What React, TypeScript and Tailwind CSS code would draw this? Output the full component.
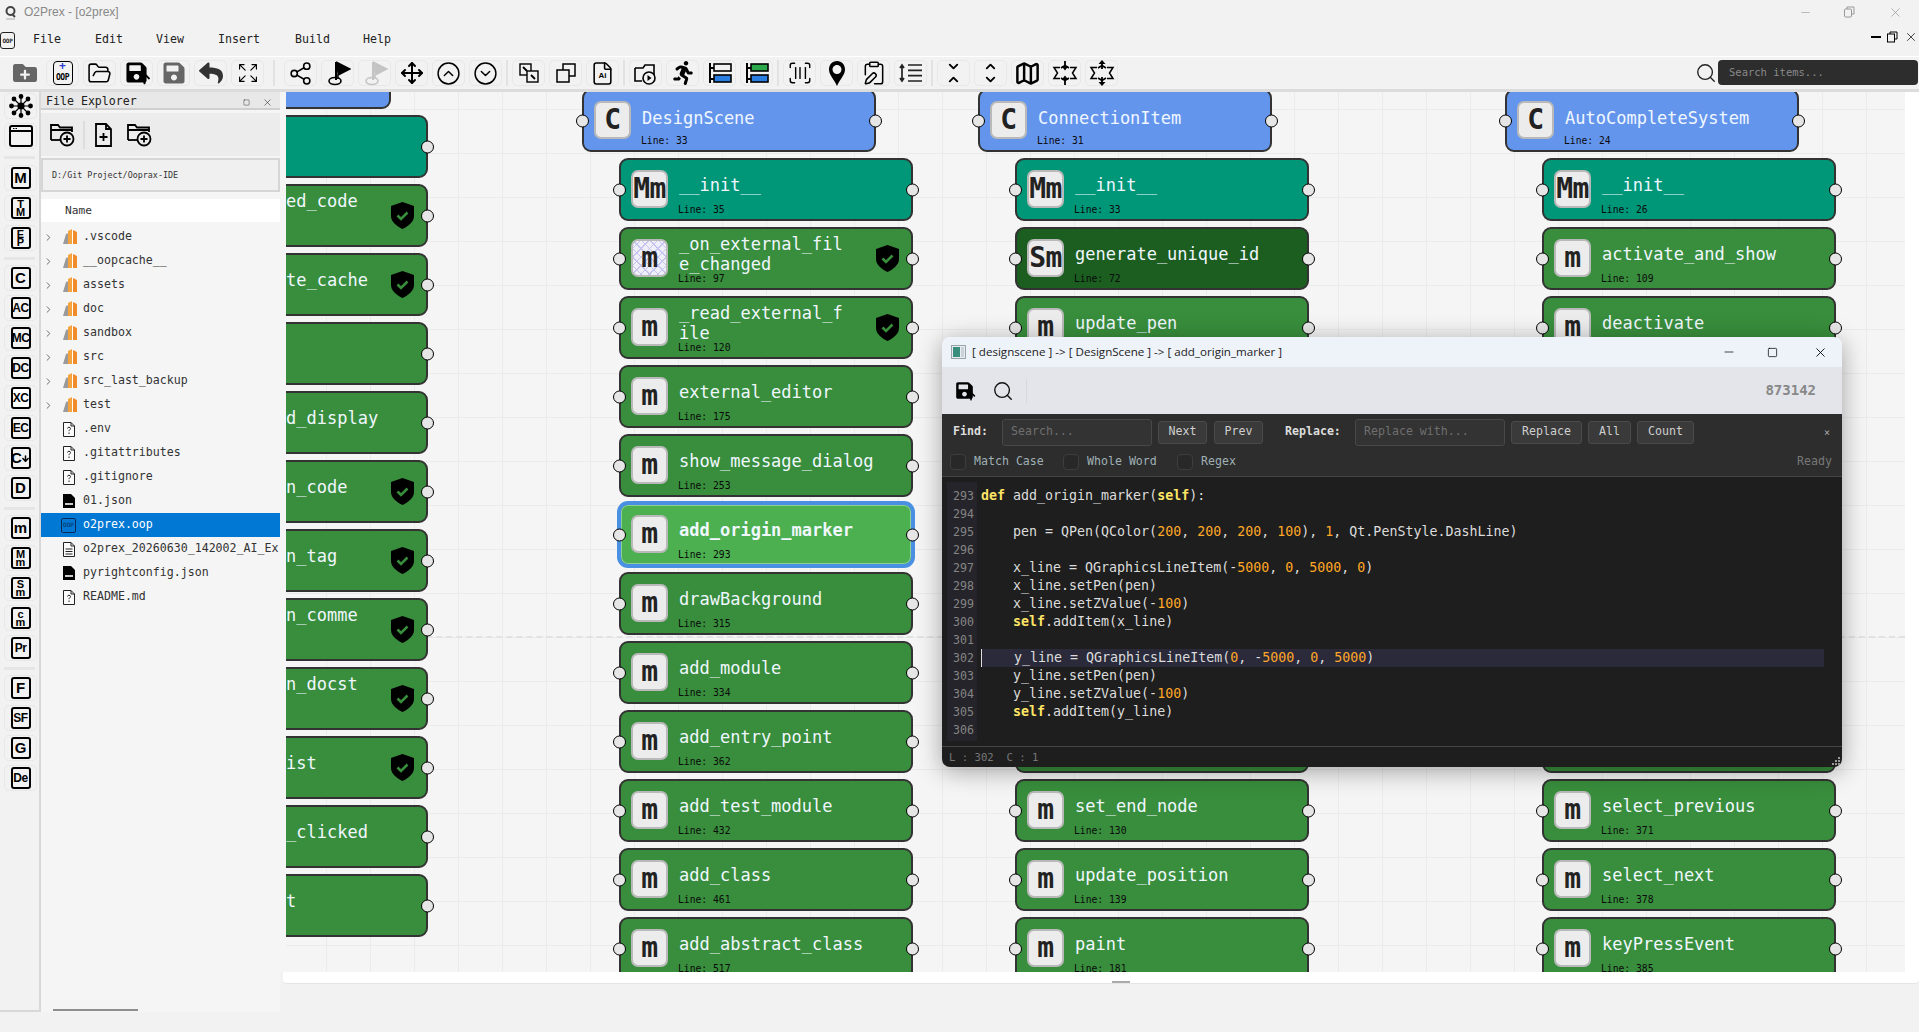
import React from "react";
import {
  FolderOpen, Share2, Move, CircleChevronUp, CircleChevronDown, ScanBarcode, ClipboardPen, Map as MapIcon,
  ChevronRight, Search, ChevronDown, ChevronUp, Minus, X, Square, File as FileIcon, ArrowDown,
} from "lucide-react";
import { FaFolderPlus, FaSave, FaArrowUp, FaReply, FaRunning } from "react-icons/fa";
import { BsArrowsFullscreen } from "react-icons/bs";

const mono = "font-['DejaVu_Sans_Mono',monospace]";
const sans = "font-['Liberation_Sans',sans-serif]";

function Shield({ className = "" }: { className?: string }) {
  return (
    <svg width="23" height="27" viewBox="0 0 23 27" className={className}>
      <path d="M11.5 0 L23 4 V14 C23 20 17 24.5 11.5 27 C6 24.5 0 20 0 14 V4 Z" fill="#000" />
      <path d="M6.5 13.5 L10 17 L16.5 10.5" fill="none" stroke="#388e3c" strokeWidth="2.6" />
    </svg>
  );
}

type NodeData = {
  kind: "class" | "teal" | "m" | "sm" | "sel";
  icon?: string;
  title?: string;
  line?: string;
  shield?: boolean;
  hatch?: boolean;
  wrap?: boolean;
  up?: boolean;
};

function Port({ side }: { side: "l" | "r" }) {
  return (
    <span
      className={`absolute top-1/2 h-[13px] w-[13px] -translate-y-1/2 rounded-full border-[1.5px] border-black bg-[#e6e6e6] ${
        side === "l" ? "left-[-8px]" : "right-[-8px]"
      }`}
    />
  );
}

function Node({ n }: { n: NodeData }) {
  const bg = {
    class: "bg-[#6495ed] border-[#333] -ml-[37px]",
    teal: "bg-[#009678] border-[#333]",
    m: "bg-[#388e3c] border-[#333]",
    sm: "bg-[#1b5e20] border-[#333]",
    sel: "bg-[#4caf50] border-[#4a90e2] shadow-[0_0_0_2px_#4a90e2,inset_0_0_0_1px_#8fcf92]",
  }[n.kind];
  return (
    <div className={`relative flex h-[63px] w-[294px] shrink-0 rounded-[9px] border-2 pl-[10px] pt-[8px] ${bg}`}>
      <Port side="l" />
      <Port side="r" />
      <div
        className={`mt-[2px] flex h-[38px] w-[37px] shrink-0 items-center justify-center rounded-[7px] border-2 border-[#b9b9b9] text-[28px] font-bold tracking-[-0.5px] text-[#222] ${mono} ${
          n.hatch
            ? "bg-[#efeffa] bg-[repeating-linear-gradient(45deg,#c4c4ee_0_1px,transparent_1px_6px),repeating-linear-gradient(-45deg,#c4c4ee_0_1px,transparent_1px_6px)]"
            : "bg-[#ececec]"
        }`}
      >
        {n.icon ?? "m"}
      </div>
      <div className="ml-[11px] flex min-w-0 flex-col">
        <div
          className={`flex items-center text-[17px] leading-[20px] text-[#f0f7ff] ${mono} ${n.kind === "sel" ? "font-bold" : ""} ${
            n.up ? "pb-[20px]" : ""
          } ${n.kind === "class" ? "h-[36px] pt-[2px]" : "h-[34px] mb-[2px]"}`}
        >
          <span className={n.wrap ? "w-[170px] break-all" : "whitespace-pre"}>{n.title}</span>
        </div>
        {n.line && (
          <div className={`-ml-[1px] h-[12px] text-[9.7px] leading-[12px] text-[#0a0a0a] ${mono}`}>Line: {n.line}</div>
        )}
      </div>
      {n.shield && <Shield className="absolute right-[12px] top-[16px]" />}
    </div>
  );
}

const pad = "         ";
const colA: NodeData[] = [
  { kind: "class", icon: "C" },
  { kind: "teal", icon: "Mm" },
  { kind: "m", title: pad + "ed_code", shield: true, up: true },
  { kind: "m", title: pad + "te_cache", shield: true },
  { kind: "m" },
  { kind: "m", title: pad + "d_display" },
  { kind: "m", title: pad + "n_code", shield: true },
  { kind: "m", title: pad + "n_tag", shield: true },
  { kind: "m", title: pad + "n_comme", shield: true, up: true },
  { kind: "m", title: pad + "n_docst", shield: true, up: true },
  { kind: "m", title: pad + "ist", shield: true },
  { kind: "m", title: pad + "_clicked" },
  { kind: "m", title: pad + "t" },
];
const colB: NodeData[] = [
  { kind: "class", icon: "C", title: "DesignScene", line: "33" },
  { kind: "teal", icon: "Mm", title: "__init__", line: "35" },
  { kind: "m", title: "_on_external_file_changed", line: "97", shield: true, hatch: true, wrap: true },
  { kind: "m", title: "_read_external_file", line: "120", shield: true, wrap: true },
  { kind: "m", title: "external_editor", line: "175" },
  { kind: "m", title: "show_message_dialog", line: "253" },
  { kind: "sel", title: "add_origin_marker", line: "293" },
  { kind: "m", title: "drawBackground", line: "315" },
  { kind: "m", title: "add_module", line: "334" },
  { kind: "m", title: "add_entry_point", line: "362" },
  { kind: "m", title: "add_test_module", line: "432" },
  { kind: "m", title: "add_class", line: "461" },
  { kind: "m", title: "add_abstract_class", line: "517" },
];
const colC: NodeData[] = [
  { kind: "class", icon: "C", title: "ConnectionItem", line: "31" },
  { kind: "teal", icon: "Mm", title: "__init__", line: "33" },
  { kind: "sm", icon: "Sm", title: "generate_unique_id", line: "72" },
  { kind: "m", title: "update_pen", line: "79" },
  { kind: "m" }, { kind: "m" }, { kind: "m" }, { kind: "m" }, { kind: "m" }, { kind: "m" },
  { kind: "m", title: "set_end_node", line: "130" },
  { kind: "m", title: "update_position", line: "139" },
  { kind: "m", title: "paint", line: "181" },
];
const colD: NodeData[] = [
  { kind: "class", icon: "C", title: "AutoCompleteSystem", line: "24" },
  { kind: "teal", icon: "Mm", title: "__init__", line: "26" },
  { kind: "m", title: "activate_and_show", line: "109" },
  { kind: "m", title: "deactivate", line: "120" },
  { kind: "m" }, { kind: "m" }, { kind: "m" }, { kind: "m" }, { kind: "m" }, { kind: "m" },
  { kind: "m", title: "select_previous", line: "371" },
  { kind: "m", title: "select_next", line: "378" },
  { kind: "m", title: "keyPressEvent", line: "385" },
];

function Column({ nodes, className }: { nodes: NodeData[]; className: string }) {
  return (
    <div className={`absolute flex flex-col gap-[6px] ${className}`}>
      {nodes.map((n, i) => (
        <Node key={i} n={n} />
      ))}
    </div>
  );
}

function TB({ children }: { children?: React.ReactNode }) {
  return (
    <div className="flex h-[26px] w-[33px] shrink-0 items-center justify-center rounded-[5px] border border-[#e8e8e8] text-black">
      {children}
    </div>
  );
}
const Sep = ({ className = "" }: { className?: string }) => <div className={`h-[26px] w-[2px] shrink-0 bg-[#e2e2e2] ${className}`} />;

function FlagIcon({ color }: { color: string }) {
  return (
    <svg width="26" height="26" viewBox="0 0 26 26">
      <path d="M11 2 L25 9 L13 15 V19" fill={color} stroke={color} strokeWidth="1.5" />
      <path d="M11 2 V20" stroke={color} strokeWidth="2" />
      <ellipse cx="10" cy="21" rx="6" ry="3.5" fill="none" stroke={color} strokeWidth="1.6" />
    </svg>
  );
}
function StackIcon({ top }: { top: string }) {
  return (
    <svg width="26" height="24" viewBox="0 0 26 24">
      <path d="M3 2 V22 M3 7 H7 M3 18 H7" stroke="#000" strokeWidth="2" fill="none" />
      <rect x="7" y="3" width="17" height="7" fill={top} stroke="#000" strokeWidth="1.6" />
      <rect x="7" y="14" width="17" height="7" fill="#2a7de1" stroke="#000" strokeWidth="1.6" />
    </svg>
  );
}
function StarIcon({ inward }: { inward: boolean }) {
  return (
    <svg width="26" height="26" viewBox="0 0 26 26">
      <path
        d="M8 7.5 L2 7.5 L5.5 13 L2 18.5 L8 18.5 M18 7.5 L24 7.5 L20.5 13 L24 18.5 L18 18.5 M9 8 L13 5.5 L17 8 M9 18 L13 20.5 L17 18"
        fill="none"
        stroke="#000"
        strokeWidth="1.5"
      />
      <path d="M13 1 V9 M13 17 V25" stroke="#000" strokeWidth="1.8" />
      {inward ? (
        <path d="M9.5 6 L13 10.5 L16.5 6 Z M9.5 20 L13 15.5 L16.5 20 Z" fill="#000" />
      ) : (
        <path d="M9.5 4 L13 0 L16.5 4 Z M9.5 22 L13 26 L16.5 22 Z" fill="#000" />
      )}
    </svg>
  );
}

function Toolbar() {
  return (
    <div className="flex h-[36px] shrink-0 items-start border-b-[3px] border-t border-b-[#dcdcdc] border-t-white pl-[13px] pt-[3px]">
      <FaFolderPlus size={24} className="mr-[9px] mt-[1px] text-[#666]" />
      <div className="flex items-center gap-[4px]">
        <TB>
          <div className="relative flex h-[24px] w-[20px] items-end justify-center rounded-[4px] border-[1.5px] border-black pb-[1px]">
            <span className="absolute top-[-1px] text-[12px] font-bold leading-[10px] text-[#2c3fd0]">+</span>
            <span className={`text-[8px] font-bold leading-[10px] tracking-[-0.5px] ${mono}`}>OOP</span>
          </div>
        </TB>
        <TB><FolderOpen size={25} strokeWidth={1.5} /></TB>
        <TB>
          <span className="relative block h-[24px] w-[24px]">
            <FaSave size={23} />
            <FaArrowUp size={13} className="absolute bottom-0 right-[-2px]" />
          </span>
        </TB>
        <TB><FaSave size={24} className="text-[#666]" /></TB>
        <TB><FaReply size={24} className="text-[#333]" /></TB>
        <TB><BsArrowsFullscreen size={18} /></TB>
        <Sep className="mx-[5px]" />
        <TB><Share2 size={25} strokeWidth={1.5} /></TB>
        <TB><FlagIcon color="#000" /></TB>
        <TB><FlagIcon color="#c4c4c4" /></TB>
        <TB><Move size={24} strokeWidth={2} /></TB>
        <TB><CircleChevronUp size={25} strokeWidth={1.4} /></TB>
        <TB><CircleChevronDown size={25} strokeWidth={1.4} /></TB>
        <Sep />
        <TB>
          <svg width="20" height="20" viewBox="0 0 20 20" fill="none" stroke="#000" strokeWidth="1.4">
            <rect x="1" y="1" width="11" height="11" />
            <rect x="8" y="8" width="11" height="11" fill="#f2f2f2" />
            <path d="M4 4 L8 8 M12 12 L16 16" strokeWidth="1.8" />
          </svg>
        </TB>
        <TB>
          <svg width="20" height="20" viewBox="0 0 20 20" fill="none" stroke="#000" strokeWidth="1.5">
            <rect x="7" y="1" width="12" height="12" />
            <rect x="1" y="7" width="12" height="12" fill="#f2f2f2" />
          </svg>
        </TB>
        <TB>
          <span className="relative flex h-[25px] w-[20px] items-center justify-center">
            <FileIcon size={25} strokeWidth={1.5} className="absolute left-[-3px] top-0" />
            <span className={`relative mt-[5px] text-[8px] font-bold ${sans}`}>Ai</span>
          </span>
        </TB>
        <Sep />
        <TB>
          <svg width="25" height="25" viewBox="0 0 25 25" fill="none" stroke="#000" strokeWidth="1.6">
            <path d="M2 7 H10 L12 4 H21 V18 H13" />
            <path d="M2 7 V20 H9" />
            <circle cx="16" cy="17" r="6" fill="#f2f2f2" />
            <path d="M14.5 14 L18.5 17 L14.5 20 Z" fill="#000" stroke="none" />
          </svg>
        </TB>
        <TB><FaRunning size={24} /></TB>
        <TB><StackIcon top="#f2f2f2" /></TB>
        <TB><StackIcon top="#2aa84a" /></TB>
        <Sep />
        <TB><ScanBarcode size={26} strokeWidth={1.3} /></TB>
        <TB>
          <svg width="18" height="27" viewBox="0 0 18 27">
            <path d="M9 1 C4 1 1 5 1 9.5 C1 15 6 19 9 26 C12 19 17 15 17 9.5 C17 5 14 1 9 1 Z M9 5 C12 5 13.5 7.5 13.5 9.5 C13.5 12 11.5 14 9 14 C6.5 14 4.5 12 4.5 9.5 C4.5 7.5 6 5 9 5 Z" fill="#000" fillRule="evenodd" />
          </svg>
        </TB>
        <TB><ClipboardPen size={26} strokeWidth={1.4} /></TB>
        <TB>
          <svg width="24" height="20" viewBox="0 0 24 20" fill="none" stroke="#222" strokeWidth="1.7">
            <path d="M3 2 V18 M1 5 L3 2 L5 5 M1 15 L3 18 L5 15" />
            <path d="M9 2 H23 M9 7.3 H23 M9 12.6 H23 M9 18 H23" />
          </svg>
        </TB>
        <Sep />
        <TB>
          <span className="flex flex-col items-center">
            <ChevronDown size={15} strokeWidth={3} className="mb-[-1px]" />
            <ChevronUp size={15} strokeWidth={3} className="mt-[-1px]" />
          </span>
        </TB>
        <TB>
          <span className="flex flex-col items-center">
            <ChevronUp size={15} strokeWidth={3} className="mb-[-1px]" />
            <ChevronDown size={15} strokeWidth={3} className="mt-[-1px]" />
          </span>
        </TB>
        <TB><MapIcon size={27} strokeWidth={2.2} /></TB>
        <TB><StarIcon inward /></TB>
        <TB><StarIcon inward={false} /></TB>
      </div>
      <div className="ml-auto flex items-center pr-px">
        <Search size={22} strokeWidth={1.5} className="mr-[1px] text-[#222]" />
        <div className={`flex h-[25px] w-[200px] items-center rounded-[4px] bg-[#2d2d2d] pl-[11px] text-[10.5px] text-[#8a8a8a] ${mono}`}>
          Search items...
        </div>
      </div>
    </div>
  );
}

function RailBtn({ a, b, hover, arrow }: { a: string; b?: string; hover?: boolean; arrow?: boolean }) {
  return (
    <div className="flex h-[26px] w-[33px] shrink-0 items-center justify-center rounded-[5px] border border-[#e8e8e8]">
      <div
        className={`flex h-[22px] w-[20px] items-center justify-center rounded-[3px] border-2 border-black font-bold text-black ${sans} ${
          hover ? "bg-white" : ""
        } ${b ? "flex-col text-[11px] leading-[8.5px]" : a.length > 1 ? "text-[12px] tracking-[-0.5px]" : "text-[15px]"}`}
      >
        <span>{a}</span>
        {b && <span>{b}</span>}
        {arrow && <ArrowDown size={9} strokeWidth={4} className="-ml-[1px] shrink-0" />}
      </div>
    </div>
  );
}
const RailSep = ({ first }: { first?: boolean }) => (
  <div className={`flex w-[31px] shrink-0 items-center ${first ? "h-[8px]" : "h-[6px]"}`}>
    <div className="h-[3px] w-full bg-[#e6e6e6]" />
  </div>
);

function Rail() {
  return (
    <div className="flex w-[41px] shrink-0 flex-col items-start gap-[4px] border-b-2 border-r-2 border-[#d8d8d8] pl-[4px] pt-[1px]">
      <div className="flex h-[26px] w-[33px] items-center justify-center rounded-[5px] border border-[#e8e8e8]">
        <svg width="24" height="24" viewBox="0 0 24 24" fill="#000" stroke="#000" strokeWidth="1.2">
          <path d="M12 12 L12 2 M12 12 L12 22 M12 12 L2 12 M12 12 L22 12 M12 12 L5 5 M12 12 L19 19 M12 12 L19 5 M12 12 L5 19" />
          <circle cx="12" cy="12" r="3" />
          <circle cx="12" cy="2.5" r="1.8" /><circle cx="12" cy="21.5" r="1.8" />
          <circle cx="2.5" cy="12" r="1.8" /><circle cx="21.5" cy="12" r="1.8" />
          <circle cx="5" cy="5" r="1.8" /><circle cx="19" cy="19" r="1.8" />
          <circle cx="19" cy="5" r="1.8" /><circle cx="5" cy="19" r="1.8" />
        </svg>
      </div>
      <div className="flex h-[26px] w-[33px] items-center justify-center rounded-[5px] border border-[#e8e8e8]">
        <svg width="24" height="24" viewBox="0 0 24 24" fill="none" stroke="#000" strokeWidth="2">
          <rect x="1" y="2" width="22" height="20" rx="2" />
          <path d="M1 7 H23" />
          <path d="M4 4.5 H9" strokeWidth="1" strokeDasharray="1.5 1" />
        </svg>
      </div>
      <RailSep first />
      <RailBtn a="M" />
      <RailBtn a="T" b="M" />
      <RailBtn a="E" b="P" />
      <RailSep />
      <RailBtn a="C" />
      <RailBtn a="AC" />
      <RailBtn a="MC" />
      <RailBtn a="DC" />
      <RailBtn a="XC" hover />
      <RailBtn a="EC" />
      <RailBtn a="C" arrow />
      <RailBtn a="D" />
      <RailSep />
      <RailBtn a="m" />
      <RailBtn a="M" b="m" />
      <RailBtn a="S" b="m" />
      <RailBtn a="c" b="m" />
      <RailBtn a="Pr" />
      <RailSep />
      <RailBtn a="F" />
      <RailBtn a="SF" />
      <RailBtn a="G" />
      <RailBtn a="De" />
    </div>
  );
}

function FolderGlyph() {
  return (
    <svg width="14" height="16" viewBox="0 0 14 16">
      <path d="M0 15 L3 5 L6 4 V15 Z" fill="#9a9a9a" />
      <path d="M5 2 L9 0 V15 H5 Z" fill="#f6a440" />
      <rect x="9" y="1" width="1" height="14" fill="#fff" />
      <path d="M10 1 L14 3 V15 H10 Z" fill="#f08c2a" />
    </svg>
  );
}
function FileGlyph({ type }: { type: "q" | "json" | "txt" }) {
  if (type === "json")
    return (
      <svg width="12" height="14" viewBox="0 0 12 14">
        <path d="M0 0 H8 L12 4 V14 H0 Z" fill="#000" />
        <rect x="2" y="9" width="8" height="2" fill="#ccc" />
      </svg>
    );
  return (
    <svg width="12" height="15" viewBox="0 0 12 15" fill="none" stroke="#222" strokeWidth="1">
      <path d="M0.5 0.5 H8 L11.5 4 V14.5 H0.5 Z" fill="#fbfbfb" />
      <path d="M8 0.5 V4 H11.5" />
      {type === "txt" ? (
        <path d="M2.5 7 H9.5 M2.5 9.5 H9.5 M2.5 12 H9.5" />
      ) : (
        <path d="M4.5 6.5 C4.5 4.8 7.5 4.8 7.5 6.5 C7.5 7.8 6 7.8 6 9.2 M6 10.5 V12" />
      )}
    </svg>
  );
}

const tree: { n: string; t: "d" | "q" | "json" | "txt" | "oop" }[] = [
  { n: ".vscode", t: "d" }, { n: "__oopcache__", t: "d" }, { n: "assets", t: "d" }, { n: "doc", t: "d" },
  { n: "sandbox", t: "d" }, { n: "src", t: "d" }, { n: "src_last_backup", t: "d" }, { n: "test", t: "d" },
  { n: ".env", t: "q" }, { n: ".gitattributes", t: "q" }, { n: ".gitignore", t: "q" }, { n: "01.json", t: "json" },
  { n: "o2prex.oop", t: "oop" }, { n: "o2prex_20260630_142002_AI_Ex", t: "txt" }, { n: "pyrightconfig.json", t: "json" },
  { n: "README.md", t: "q" },
];

function Explorer() {
  return (
    <div className={`relative flex w-[239px] shrink-0 flex-col bg-[#f5f5f5] text-[#333] ${mono}`}>
      <div className="flex h-[18px] shrink-0 items-center border-b-2 border-[#cfcfcf] bg-[#e8e8e8] pl-[5px] pr-[7px] pt-[4px] text-[11.6px] text-[#222]">
        <span>File Explorer</span>
        <Square size={7} strokeWidth={1.5} className="ml-auto mr-[12px]" />
        <X size={11} strokeWidth={1.2} />
      </div>
      <div className="mt-[3px] flex h-[43px] shrink-0 items-center bg-[#ececec] pl-[9px]">
        <svg width="25" height="25" viewBox="0 0 25 25" fill="none" stroke="#000" strokeWidth="1.8">
          <path d="M1 18 V3 H8 L10 5.5 H22 V10 M1 8 H22" />
          <path d="M1 18 H10" />
          <circle cx="17" cy="17" r="6.5" />
          <path d="M17 13.5 V20.5 M13.5 17 H20.5" />
        </svg>
        <div className="ml-[8px] h-[28px] w-[2px] bg-[#dddddd]" />
        <svg width="17" height="24" viewBox="0 0 17 24" fill="none" stroke="#000" strokeWidth="1.8" className="ml-[10px]">
          <path d="M1 1 H11 L16 6 V23 H1 Z M11 1 V6 H16" />
          <path d="M8.5 10 V18 M4.5 14 H12.5" />
        </svg>
        <svg width="25" height="25" viewBox="0 0 25 25" fill="none" stroke="#000" strokeWidth="1.8" className="ml-[15px]">
          <path d="M1 18 V3 H8 L10 5.5 H22 V10 M1 8 H22" />
          <path d="M1 18 H10" />
          <circle cx="17" cy="17" r="6.5" />
          <path d="M17 13.5 V20.5 M13.5 17 H20.5" />
        </svg>
      </div>
      <div className="mt-[2px] flex h-[34px] shrink-0 items-center border-2 border-[#d6d6d6] bg-[#f0f0f0] pl-[9px] text-[8.4px]">
        D:/Git Project/Ooprax-IDE
      </div>
      <div className="mt-[7px] flex h-[23px] shrink-0 items-center bg-white pl-[24px] pt-[1px] text-[11.2px]">Name</div>
      <div className="mt-[3px] flex flex-col">
        {tree.map((f) => {
          const sel = f.t === "oop";
          return (
            <div key={f.n} className={`flex h-[24px] items-center overflow-hidden whitespace-nowrap text-[11.6px] ${sel ? "bg-[#0078d4] text-white" : ""}`}>
              <span className="flex w-[22px] shrink-0 justify-end">
                {f.t === "d" && <ChevronRight size={11} strokeWidth={1.5} className="mr-[9px]" />}
              </span>
              <span className="flex w-[20px] shrink-0 items-center">
                {f.t === "d" && <FolderGlyph />}
                {(f.t === "q" || f.t === "json" || f.t === "txt") && <FileGlyph type={f.t} />}
                {sel && (
                  <span className="-ml-[2px] flex h-[15px] w-[15px] items-center justify-center rounded-[2px] border border-[#0a2a55] text-[6px] leading-none text-[#0a2a55]">
                    OOP
                  </span>
                )}
              </span>
              <span>{f.n}</span>
            </div>
          );
        })}
      </div>
      <div className="absolute bottom-[1px] left-[12px] h-[2px] w-[85px] bg-[#8e8e8e]" />
    </div>
  );
}

const code = [
  "def add_origin_marker(self):",
  "",
  "    pen = QPen(QColor(200, 200, 200, 100), 1, Qt.PenStyle.DashLine)",
  "",
  "    x_line = QGraphicsLineItem(-5000, 0, 5000, 0)",
  "    x_line.setPen(pen)",
  "    x_line.setZValue(-100)",
  "    self.addItem(x_line)",
  "",
  "    y_line = QGraphicsLineItem(0, -5000, 0, 5000)",
  "    y_line.setPen(pen)",
  "    y_line.setZValue(-100)",
  "    self.addItem(y_line)",
  "",
];

function CodeLine({ text }: { text: string }) {
  const parts = text.split(/(\bdef\b|\bself\b|\b\d+\b)/);
  return (
    <>
      {parts.map((p, i) =>
        p === "def" || p === "self" ? (
          <span key={i} className="font-bold text-[#ffe566]">{p}</span>
        ) : /^\d+$/.test(p) ? (
          <span key={i} className="text-[#ffa726]">{p}</span>
        ) : (
          <span key={i}>{p}</span>
        )
      )}
    </>
  );
}

const fbtn = "flex h-[23px] shrink-0 items-center justify-center rounded-[3px] border border-[#4a4a4a] bg-[#3a3a3a] text-[#cfcfcf]";
const finput = "flex h-[27px] w-[150px] shrink-0 items-center rounded-[3px] border border-[#484848] bg-[#333] pl-[8px] text-[#6f6f6f]";

function EditorWindow() {
  return (
    <div className={`absolute left-[942px] top-[337px] z-10 flex h-[430px] w-[900px] flex-col overflow-hidden rounded-[8px] shadow-[0_4px_24px_rgba(0,0,0,0.35)] ${mono}`}>
      <div className={`flex h-[30px] shrink-0 items-center bg-[#eef3fa] pl-[9px] text-[12px] text-[#222] ${sans}`}>
        <svg width="15" height="14" viewBox="0 0 15 14" className="mr-[6px]">
          <rect x="0.5" y="0.5" width="14" height="13" fill="#e8ecef" stroke="#9aa5aa" />
          <rect x="2" y="2" width="7" height="10" fill="#3a8f7c" />
          <rect x="10" y="2" width="3" height="10" fill="#c8d4da" />
        </svg>
        <span className="font-['Open_Sans',sans-serif] text-[11.6px]">[ designscene ] -&gt; [ DesignScene ] -&gt; [ add_origin_marker ]</span>
        <Minus size={14} strokeWidth={1.2} className="ml-auto mr-[31px] text-black" />
        <Square size={11} strokeWidth={1.6} className="mr-[35px] text-black" />
        <X size={15} strokeWidth={1.4} className="mr-[14px] text-black" />
      </div>
      <div className="flex h-[47px] shrink-0 items-center bg-[#e3e5ea] pl-[13px]">
        <span className="relative block h-[20px] w-[21px]">
          <FaSave size={19} />
          <FaArrowUp size={10} className="absolute bottom-0 right-0" />
        </span>
        <Search size={22} strokeWidth={1.5} className="ml-[16px] text-[#111]" />
        <div className="ml-[12px] h-[24px] w-px bg-[#d6d8dd]" />
        <span className="ml-auto mr-[26px] text-[14px] font-bold text-[#888]">873142</span>
      </div>
      <div className="flex h-[63px] shrink-0 flex-col border-b border-[#444] bg-[#2d2d2d] text-[11.6px]">
        <div className="flex h-[36px] shrink-0 items-center pl-[11px]">
          <span className="w-[49px] font-bold text-[#ddd]">Find:</span>
          <div className={finput}>Search...</div>
          <div className={`${fbtn} ml-[6px] w-[49px]`}>Next</div>
          <div className={`${fbtn} ml-[7px] w-[49px]`}>Prev</div>
          <span className="ml-[22px] w-[70px] font-bold text-[#ddd]">Replace:</span>
          <div className={finput}>Replace with...</div>
          <div className={`${fbtn} ml-[6px] w-[71px]`}>Replace</div>
          <div className={`${fbtn} ml-[6px] w-[43px]`}>All</div>
          <div className={`${fbtn} ml-[6px] w-[57px]`}>Count</div>
          <span className="ml-auto mr-[12px] text-[10px] text-[#aaa]">×</span>
        </div>
        <div className="flex flex-1 items-center pl-[8px] pb-[3px] text-[#9fb0b5]">
          <span className="h-[16px] w-[16px] rounded-[4px] border border-[#3d3d3d] bg-[#282828]" />
          <span className="ml-[8px] w-[89px]">Match Case</span>
          <span className="h-[16px] w-[16px] rounded-[4px] border border-[#3d3d3d] bg-[#282828]" />
          <span className="ml-[8px] w-[90px]">Whole Word</span>
          <span className="h-[16px] w-[16px] rounded-[4px] border border-[#3d3d3d] bg-[#282828]" />
          <span className="ml-[8px]">Regex</span>
          <span className="ml-auto mr-[10px] text-[#777]">Ready</span>
        </div>
      </div>
      <div className="relative flex min-h-0 flex-1 bg-[#1e1e1e] pl-[5px] pt-[5px] text-[13.3px] leading-[18px]">
        <div className="h-[259px] w-[30px] shrink-0 bg-[#24242a] pr-[3px] pt-[5px] text-right text-[11.6px] text-[#858585]">
          {code.map((_, i) => (
            <div key={i} className="h-[18px]">{293 + i}</div>
          ))}
        </div>
        <div className="ml-[4px] flex flex-1 flex-col pt-[5px] text-[#dcdcdc]">
          {code.map((l, i) => (
            <div
              key={i}
              className={`h-[18px] w-[843px] whitespace-pre ${i === 9 ? "border-l border-[#ddd] bg-[#2a2a3a]" : ""}`}
            >
              <CodeLine text={l} />
            </div>
          ))}
        </div>
      </div>
      <div className="relative flex h-[21px] shrink-0 items-center whitespace-pre border-t border-[#444] bg-[#1e1e1e] pl-[7px] pt-[2px] text-[10.6px] text-[#777]">
        L : 302  C : 1
        <svg width="10" height="10" viewBox="0 0 10 10" className="absolute bottom-[1px] right-[1px]" fill="#999">
          <rect x="7" y="1" width="2" height="2" /><rect x="4" y="4" width="2" height="2" /><rect x="7" y="4" width="2" height="2" />
          <rect x="1" y="7" width="2" height="2" /><rect x="4" y="7" width="2" height="2" /><rect x="7" y="7" width="2" height="2" />
        </svg>
      </div>
    </div>
  );
}

export default function App() {
  return (
    <div className="relative flex h-[1032px] w-[1919px] flex-col overflow-hidden bg-[#f2f2f2]">
      <div className={`flex h-[24px] shrink-0 items-center pl-[4px] text-[12px] text-[#888] ${sans}`}>
        <svg width="13" height="15" viewBox="0 0 13 15" className="mr-[7px]" fill="none" stroke="#444" strokeWidth="2">
          <circle cx="6.5" cy="6" r="4" />
          <path d="M8 9 L11 12" />
          <path d="M2 14 H11" stroke="#aaa" strokeWidth="1" />
        </svg>
        <span>O2Prex - [o2prex]</span>
        <Minus size={13} strokeWidth={1} className="ml-auto mr-[32px]" />
        <svg width="11" height="12" viewBox="0 0 11 12" fill="none" stroke="#999" strokeWidth="1" className="mr-[33px]">
          <rect x="0.5" y="3" width="7" height="8" rx="1" />
          <path d="M3 3 V1 H10 V8 H8" />
        </svg>
        <X size={15} strokeWidth={1} className="mr-[16px]" />
      </div>
      <div className={`flex h-[32px] shrink-0 items-center text-[11.6px] text-[#222] ${mono}`}>
        <div className="flex h-[17px] w-[15px] shrink-0 items-center justify-center rounded-[3px] border border-[#222] text-[6px] font-bold tracking-[-0.3px]">OOP</div>
        <div className="ml-[18px] flex">
          <span className="w-[62px]">File</span>
          <span className="w-[61px]">Edit</span>
          <span className="w-[62px]">View</span>
          <span className="w-[77px]">Insert</span>
          <span className="w-[68px]">Build</span>
          <span>Help</span>
        </div>
        <div className="ml-auto flex items-center pb-[6px] text-black">
          <div className="mr-[6px] h-[2px] w-[10px] bg-black" />
          <svg width="11" height="12" viewBox="0 0 11 12" fill="none" stroke="#000" strokeWidth="1" className="mr-[6px]">
            <rect x="0.5" y="3" width="7" height="8" />
            <path d="M3 3 V1 H10 V8 H8" />
          </svg>
          <X size={14} strokeWidth={1.2} className="mr-[1px]" />
        </div>
      </div>
      <Toolbar />
      <div className="flex h-[920px] shrink-0">
        <Rail />
        <Explorer />
        <div className="flex flex-1 flex-col bg-[#f2f2f2]">
          <div className="flex h-[880px] shrink-0 bg-[#f5f5f5] pl-[6px]">
            <div className="relative flex-1 overflow-hidden bg-[#f5f5f5] bg-[linear-gradient(#ebebeb_1px,transparent_1px),linear-gradient(90deg,#ebebeb_1px,transparent_1px)] bg-size-[44px_44px] bg-position-[40px_17px]">
              <div className="absolute left-0 right-0 top-[544px] border-t-2 border-dashed border-[#e2e2e2]" />
              <Column nodes={colA} className="left-[-152px] top-[-46px]" />
              <Column nodes={colB} className="left-[333px] top-[-3px]" />
              <Column nodes={colC} className="left-[729px] top-[-3px]" />
              <Column nodes={colD} className="left-[1256px] top-[-3px]" />
            </div>
            <div className="w-[14px] shrink-0 bg-white" />
          </div>
          <div className="relative ml-[3px] h-[12px] shrink-0 rounded-b-[4px] border-b border-[#e6e6e6] bg-white">
            <div className="absolute bottom-0 left-[829px] h-[2px] w-[18px] bg-[#aaa]" />
          </div>
        </div>
      </div>
      <EditorWindow />
    </div>
  );
}
